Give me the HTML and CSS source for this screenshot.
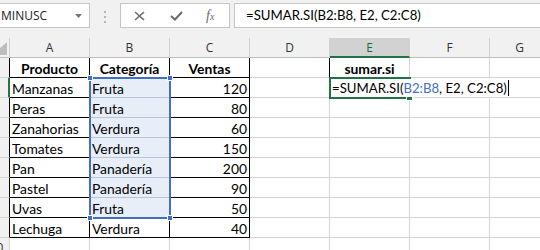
FILE: index.html
```html
<!DOCTYPE html>
<html lang="es">
<head>
    <meta charset="UTF-8">
    <title>SUMAR.SI</title>
    <link rel="stylesheet" href="styles.css">
</head>
<body>
    <div class="toolbar">
        <div class="namebox">
            <span class="name">MINUSC</span>
            <svg class="arrow" width="7" height="4" viewBox="0 0 7 4"><polygon points="0,0 7,0 3.5,4" fill="#777"/></svg>
        </div>
        <svg class="grip" width="3" height="13" viewBox="0 0 3 13">
            <rect x="0" y="0" width="2" height="2" fill="#b4b4b4"/>
            <rect x="0" y="5" width="2" height="2" fill="#b4b4b4"/>
            <rect x="0" y="10" width="2" height="2" fill="#b4b4b4"/>
        </svg>
        <div class="fx-buttons">
            <svg class="btn-x" width="11" height="10" viewBox="0 0 11 10"><path d="M1 1 L10 9 M10 1 L1 9" stroke="#6a6a6a" stroke-width="1.6" fill="none"/></svg>
            <svg class="btn-ok" width="13" height="10" viewBox="0 0 13 10"><path d="M1 5 L5 8.5 L12 1" stroke="#6a6a6a" stroke-width="2" fill="none"/></svg>
            <span class="btn-fx">f<small>x</small></span>
        </div>
        <div class="formula">=SUMAR.SI(B2:B8, E2, C2:C8)</div>
    </div>

    <div class="sheet">
        <!-- column headers -->
        <div class="hd corner">
            <svg width="8" height="18" viewBox="0 0 8 18"><polygon points="0,10 7,4 7,17 0,17" fill="#bdbdbd"/></svg>
        </div>
        <div class="hd">A</div>
        <div class="hd">B</div>
        <div class="hd">C</div>
        <div class="hd">D</div>
        <div class="hd active-col">E</div>
        <div class="hd">F</div>
        <div class="hd">G</div>

        <!-- row 1 -->
        <div class="rh tb"></div>
        <div class="c tb bold center">Producto</div>
        <div class="c tb bold center">Categoría</div>
        <div class="c tb bold center">Ventas</div>
        <div class="c left-of-e"></div>
        <div class="c bold center">sumar.si</div>
        <div class="c"></div>
        <div class="c"></div>

        <!-- row 2 -->
        <div class="rh tb active-row"></div>
        <div class="c tb">Manzanas</div>
        <div class="c tb sel">Fruta</div>
        <div class="c tb num">120</div>
        <div class="c"></div>
        <div class="c"></div>
        <div class="c"></div>
        <div class="c"></div>

        <!-- row 3 -->
        <div class="rh tb"></div>
        <div class="c tb">Peras</div>
        <div class="c tb sel">Fruta</div>
        <div class="c tb num">80</div>
        <div class="c"></div>
        <div class="c"></div>
        <div class="c"></div>
        <div class="c"></div>

        <!-- row 4 -->
        <div class="rh tb"></div>
        <div class="c tb">Zanahorias</div>
        <div class="c tb sel">Verdura</div>
        <div class="c tb num">60</div>
        <div class="c"></div>
        <div class="c"></div>
        <div class="c"></div>
        <div class="c"></div>

        <!-- row 5 -->
        <div class="rh tb"></div>
        <div class="c tb">Tomates</div>
        <div class="c tb sel">Verdura</div>
        <div class="c tb num">150</div>
        <div class="c"></div>
        <div class="c"></div>
        <div class="c"></div>
        <div class="c"></div>

        <!-- row 6 -->
        <div class="rh tb"></div>
        <div class="c tb">Pan</div>
        <div class="c tb sel">Panadería</div>
        <div class="c tb num">200</div>
        <div class="c"></div>
        <div class="c"></div>
        <div class="c"></div>
        <div class="c"></div>

        <!-- row 7 -->
        <div class="rh tb"></div>
        <div class="c tb">Pastel</div>
        <div class="c tb sel">Panadería</div>
        <div class="c tb num">90</div>
        <div class="c"></div>
        <div class="c"></div>
        <div class="c"></div>
        <div class="c"></div>

        <!-- row 8 -->
        <div class="rh tb"></div>
        <div class="c tb">Uvas</div>
        <div class="c tb sel">Fruta</div>
        <div class="c tb num">50</div>
        <div class="c"></div>
        <div class="c"></div>
        <div class="c"></div>
        <div class="c"></div>

        <!-- row 9 -->
        <div class="rh tb"></div>
        <div class="c tb">Lechuga</div>
        <div class="c tb">Verdura</div>
        <div class="c tb num">40</div>
        <div class="c"></div>
        <div class="c"></div>
        <div class="c"></div>
        <div class="c"></div>

        <!-- row 10: only the last digit of the row number peeks out -->
        <div class="rh"><span>10</span></div>
        <div class="c"></div>
        <div class="c"></div>
        <div class="c"></div>
        <div class="c"></div>
        <div class="c"></div>
        <div class="c"></div>
        <div class="c"></div>

        <!-- overlays: referenced range and cell being edited -->
        <div class="range">
            <i class="h tl"></i><i class="h tr"></i><i class="h bl"></i><i class="h br"></i>
        </div>
        <div class="active-cell"><i class="fill"></i></div>
        <div class="editor">=SUMAR.SI(<span class="ref">B2:B8</span>, E2, C2:C8)<i class="caret"></i></div>
    </div>
</body>
</html>
```

FILE: styles.css
```css
* {
    margin: 0;
    padding: 0;
    box-sizing: border-box;
}

body {
    width: 540px;
    height: 250px;
    overflow: hidden;
    background: white;
    font-family: Lato, 'Liberation Sans', sans-serif;
    color: #000;
}

/* ---------- formula bar ---------- */

.toolbar {
    height: 38px;
    background: #f1f1f1;
    display: flex;
    align-items: flex-start;
    padding-top: 3px;
}

.namebox {
    width: 91px;
    height: 25px;
    margin-left: -1px;
    background: white;
    border: 1px solid #c6c6c6;
    display: flex;
    align-items: center;
    justify-content: space-between;
    padding: 0 7px 0 1px;
    font-family: 'Open Sans', sans-serif;
    font-size: 12px;
    color: #222;
}

.grip {
    margin: 8px 0 0 14px;
}

.fx-buttons {
    width: 110px;
    height: 25px;
    margin-left: 13px;
    background: white;
    border: 1px solid #c6c6c6;
    display: flex;
    align-items: center;
    padding-left: 13px;
}

.btn-ok {
    margin-left: 25px;
}

.btn-fx {
    margin-left: 23px;
    font-family: 'Liberation Serif', serif;
    font-style: italic;
    font-size: 14px;
    color: #6a6a6a;
}

.btn-fx small {
    font-size: 10px;
}

.formula {
    flex: 1;
    height: 25px;
    margin-left: 4px;
    margin-right: -2px;
    background: white;
    border: 1px solid #c6c6c6;
    padding-left: 11px;
    font-size: 13.2px;
    line-height: 23px;
}

/* ---------- grid ---------- */

.sheet {
    position: relative;
    display: grid;
    grid-template-columns: 10px repeat(6, 80px) 60px;
    grid-template-rows: 20px;
    grid-auto-rows: 20px;
    overflow: hidden;
}

.hd, .rh, .c {
    border-right: 1px solid #d4d4d4;
    border-bottom: 1px solid #d4d4d4;
    white-space: nowrap;
    overflow: hidden;
}

.hd {
    background: #f1f1f1;
    border-right-color: #d0d0d0;
    border-bottom-color: #bdbdbd;
    font-family: 'Open Sans', sans-serif;
    font-size: 12px;
    color: #333;
    text-align: center;
    line-height: 19px;
}

.corner {
    position: relative;
}

.corner svg {
    position: absolute;
    left: 0;
    top: 0;
}

.active-col {
    background: #d2d2d2;
    color: #1e6b3f;
    border-bottom: 2px solid #217346;
}

.rh {
    background: #f1f1f1;
    font-family: 'Open Sans', sans-serif;
    font-size: 12px;
    color: #333;
    line-height: 19px;
}

.rh span {
    display: block;
    width: 27px;
    margin-left: -17px;
    text-align: center;
}

.rh.tb {
    border-right-color: #000;
}

.rh.active-row {
    border-right: 2px solid #217346;
}

.c {
    font-size: 13.9px;
    line-height: 19px;
    padding: 1px 2px 0;
}

.c.tb {
    border-right-color: #000;
    border-bottom-color: #000;
}

.c.sel {
    background: #e8eef8;
    border-bottom-color: #b9c5da;
}

.left-of-e {
    border-right-color: #000;
}

.bold {
    font-weight: bold;
}

.center {
    text-align: center;
}

.num {
    text-align: right;
}

/* ---------- overlays ---------- */

.range {
    position: absolute;
    left: 89px;
    top: 39px;
    width: 82px;
    height: 142px;
    border: 2px solid #3f6fc6;
}

.h {
    position: absolute;
    width: 6px;
    height: 6px;
    background: #3f6fc6;
    border: 1px solid white;
}

.tl { left: -4px; top: -4px; }
.tr { right: -4px; top: -4px; }
.bl { left: -4px; bottom: -4px; }
.br { right: -4px; bottom: -4px; }

.active-cell {
    position: absolute;
    left: 329px;
    top: 39px;
    width: 82px;
    height: 22px;
    border: 2px solid #217346;
}

.fill {
    position: absolute;
    right: -4px;
    bottom: -4px;
    width: 7px;
    height: 6px;
    background: #217346;
    border: 1px solid white;
}

/* in-cell editor spills over the right edge of E2 */
.editor {
    position: absolute;
    left: 331px;
    top: 41px;
    width: 178px;
    height: 18px;
    background: white;
    font-size: 13.2px;
    line-height: 18px;
    padding-left: 1px;
    white-space: nowrap;
}

.ref {
    color: #3f6fc6;
}

.caret {
    display: inline-block;
    width: 1px;
    height: 16px;
    background: #000;
    vertical-align: -3px;
    margin-left: 1px;
}
```
